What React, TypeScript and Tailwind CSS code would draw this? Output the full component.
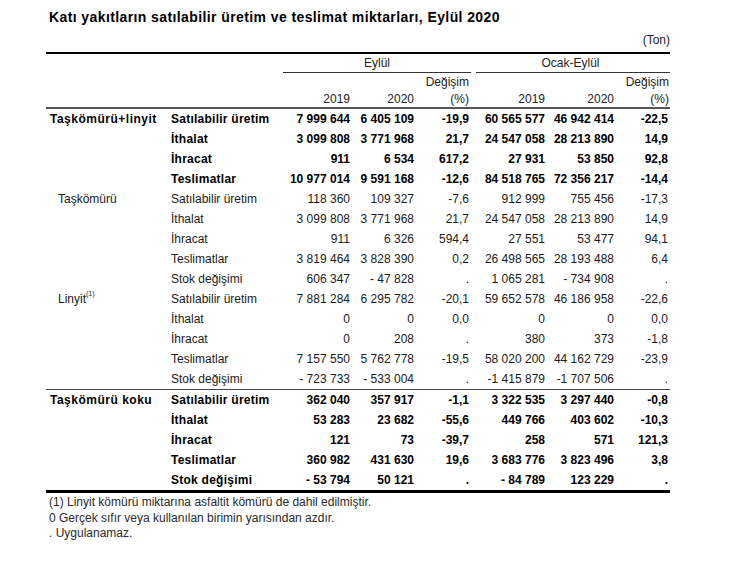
import React from 'react';

type Item = [string, string, string, string, string, string, string];

type Group = {
  label: string;
  bold: boolean;
  sup?: string;
  items: Item[];
};

const groups: Group[] = [
  {
    label: 'Taşkömürü+linyit',
    bold: true,
    items: [
      ['Satılabilir üretim', '7 999 644', '6 405 109', '-19,9', '60 565 577', '46 942 414', '-22,5'],
      ['İthalat', '3 099 808', '3 771 968', '21,7', '24 547 058', '28 213 890', '14,9'],
      ['İhracat', '911', '6 534', '617,2', '27 931', '53 850', '92,8'],
      ['Teslimatlar', '10 977 014', '9 591 168', '-12,6', '84 518 765', '72 356 217', '-14,4'],
    ],
  },
  {
    label: 'Taşkömürü',
    bold: false,
    items: [
      ['Satılabilir üretim', '118 360', '109 327', '-7,6', '912 999', '755 456', '-17,3'],
      ['İthalat', '3 099 808', '3 771 968', '21,7', '24 547 058', '28 213 890', '14,9'],
      ['İhracat', '911', '6 326', '594,4', '27 551', '53 477', '94,1'],
      ['Teslimatlar', '3 819 464', '3 828 390', '0,2', '26 498 565', '28 193 488', '6,4'],
      ['Stok değişimi', '606 347', '- 47 828', '.', '1 065 281', '- 734 908', '.'],
    ],
  },
  {
    label: 'Linyit',
    bold: false,
    sup: '(1)',
    items: [
      ['Satılabilir üretim', '7 881 284', '6 295 782', '-20,1', '59 652 578', '46 186 958', '-22,6'],
      ['İthalat', '0', '0', '0,0', '0', '0', '0,0'],
      ['İhracat', '0', '208', '.', '380', '373', '-1,8'],
      ['Teslimatlar', '7 157 550', '5 762 778', '-19,5', '58 020 200', '44 162 729', '-23,9'],
      ['Stok değişimi', '- 723 733', '- 533 004', '.', '-1 415 879', '-1 707 506', '.'],
    ],
  },
  {
    label: 'Taşkömürü koku',
    bold: true,
    items: [
      ['Satılabilir üretim', '362 040', '357 917', '-1,1', '3 322 535', '3 297 440', '-0,8'],
      ['İthalat', '53 283', '23 682', '-55,6', '449 766', '403 602', '-10,3'],
      ['İhracat', '121', '73', '-39,7', '258', '571', '121,3'],
      ['Teslimatlar', '360 982', '431 630', '19,6', '3 683 776', '3 823 496', '3,8'],
      ['Stok değişimi', '- 53 794', '50 121', '.', '- 84 789', '123 229', '.'],
    ],
  },
];

const cols = 'grid grid-cols-[125px_112px_69px_64px_55px_76px_69px_54px]';

function GroupRows({ group }: { group: Group }) {
  return (
    <>
      {group.items.map((item, i) => (
        <div
          key={item[0]}
          className={`${cols} h-[20px] text-[12px] leading-[20px] whitespace-nowrap ${group.bold ? 'font-bold text-black' : 'text-[#1a1a1a]'}`}
        >
          <div className={group.bold ? 'pl-[4px] tracking-[0.5px]' : 'pl-[12px]'}>
            {i === 0 && (
              <>
                {group.label}
                {group.sup && <sup className="text-[7px] -top-[7px]">{group.sup}</sup>}
              </>
            )}
          </div>
          <div className={group.bold ? 'tracking-[0.25px]' : ''}>{item[0]}</div>
          {item.slice(1).map((v, j) => (
            <div key={j} className="text-right pr-[2px]">
              {v}
            </div>
          ))}
        </div>
      ))}
    </>
  );
}

export default function App() {
  return (
    <div className="min-h-[567px] w-[733px] bg-white text-black font-['Liberation_Sans',Arial,sans-serif]">
      <h1 className="pl-[49px] pt-[9px] text-[14px] leading-[16px] font-bold tracking-[0.4px] whitespace-nowrap">
        Katı yakıtların satılabilir üretim ve teslimat miktarları, Eylül 2020
      </h1>

      <div className="ml-[46px] w-[624px]">
        <div className="mt-[8px] h-[19px] text-right text-[12px] leading-[14px] text-[#222]">(Ton)</div>

        <div className="h-[2px] bg-black" />

        {/* header */}
        <div className={`${cols} h-[18px] text-[12px] leading-[18px] text-[#222]`}>
          <div className="col-start-3 col-span-3 text-center">Eylül</div>
          <div className="col-start-6 col-span-3 text-center">Ocak-Eylül</div>
        </div>
        <div className={`${cols} h-[1px]`}>
          <div className="col-start-3 col-span-3 bg-[#333]" />
          <div className="col-start-6 col-span-3 ml-[5px] bg-[#333]" />
        </div>
        <div className={`${cols} h-[18px] text-[12px] leading-[18px] text-[#222]`}>
          <div className="col-start-5 text-right pr-[2px]">Değişim</div>
          <div className="col-start-8 text-right pr-[1px]">Değişim</div>
        </div>
        <div className={`${cols} h-[16px] text-[12px] leading-[16px] text-[#222]`}>
          <div className="col-start-3 text-right pr-[2px]">2019</div>
          <div className="text-right pr-[2px]">2020</div>
          <div className="text-right pr-[2px]">(%)</div>
          <div className="text-right pr-[2px]">2019</div>
          <div className="text-right pr-[2px]">2020</div>
          <div className="text-right pr-[1px]">(%)</div>
        </div>
        <div className="h-[2px] bg-[#555]" />

        {/* body */}
        <GroupRows group={groups[0]} />
        <GroupRows group={groups[1]} />
        <GroupRows group={groups[2]} />
        <div className="h-[1px] bg-[#444]" />
        <GroupRows group={groups[3]} />
        <div className="h-[3px] bg-black" />

        {/* footnotes */}
        <div className="pl-[3px] pt-[2px] text-[12px] leading-[15.5px] text-[#2a2a2a]">
          <div>(1) Linyit kömürü miktarına asfaltit kömürü de dahil edilmiştir.</div>
          <div>0 Gerçek sıfır veya kullanılan birimin yarısından azdır.</div>
          <div>. Uygulanamaz.</div>
        </div>
      </div>
    </div>
  );
}
